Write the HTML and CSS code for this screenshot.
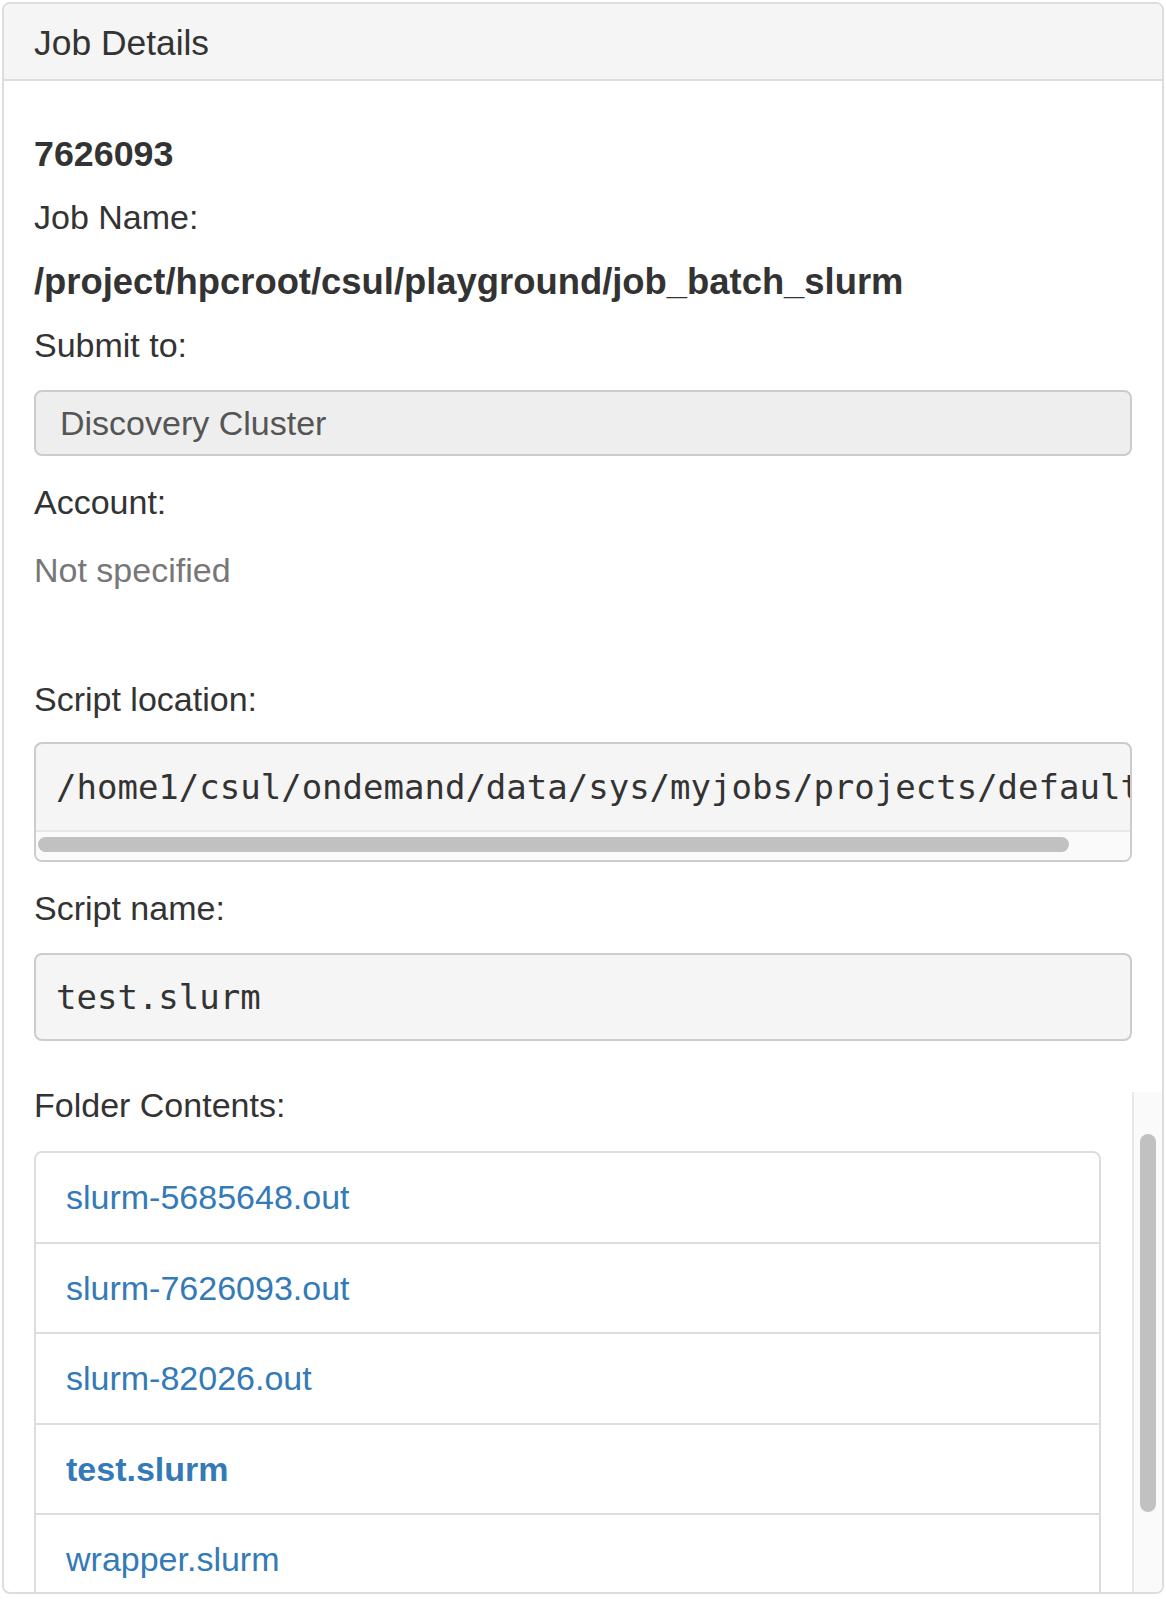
FILE: index.html
```html
<!DOCTYPE html>
<html lang="en">
<head>
<meta charset="utf-8">
<title>Job Details</title>
<link rel="stylesheet" href="styles.css">
</head>
<body>
<div class="panel">
  <div class="panel-heading">
    <h3 class="panel-title">Job Details</h3>
  </div>
  <div class="panel-body">
    <div class="job-id">7626093</div>
    <div class="line label-job-name">Job Name:</div>
    <div class="job-name">/project/hpcroot/csul/playground/job_batch_slurm</div>
    <div class="line label-submit">Submit to:</div>
    <div class="select-box">Discovery Cluster</div>
    <div class="line label-account">Account:</div>
    <div class="line muted">Not specified</div>
    <div class="line label-script-loc">Script location:</div>
    <div class="code-box">
      <pre class="code code-scroll">/home1/csul/ondemand/data/sys/myjobs/projects/default/1</pre>
      <div class="hscroll"><div class="hscroll-thumb"></div></div>
    </div>
    <div class="line label-script-name">Script name:</div>
    <pre class="code code-plain">test.slurm</pre>
    <div class="files">
      <div class="files-content">
        <div class="line">Folder Contents:</div>
        <ul class="file-list">
          <li class="file-item"><a href="#">slurm-5685648.out</a></li>
          <li class="file-item"><a href="#">slurm-7626093.out</a></li>
          <li class="file-item"><a href="#">slurm-82026.out</a></li>
          <li class="file-item"><a href="#" class="current">test.slurm</a></li>
          <li class="file-item"><a href="#">wrapper.slurm</a></li>
        </ul>
      </div>
      <div class="vscroll"><div class="vscroll-thumb"></div></div>
    </div>
  </div>
</div>
</body>
</html>
```
FILE: styles.css
```css
* { box-sizing: border-box; }
html, body { margin: 0; }
body {
  padding: 2px;
  background: #fff;
  color: #333;
  font-family: "Liberation Sans", Arial, sans-serif;
}
.panel {
  border: 2px solid #ddd;
  border-radius: 8px;
  overflow: hidden;
  background: #fff;
}
.panel-heading {
  background: #f5f5f5;
  border-bottom: 2px solid #ddd;
  padding: 20px 30px 17px;
}
.panel-title {
  margin: 0;
  font-size: 35.4px;
  line-height: 38px;
  font-weight: normal;
  color: #333;
}
.panel-body {
  padding: 30px 30px 0;
}
.line {
  font-size: 34px;
  line-height: 48px;
}
.job-id {
  margin-top: 19px;
  font-size: 35.8px;
  line-height: 48px;
  font-weight: bold;
}
.label-job-name { margin-top: 15px; }
.job-name {
  margin-top: 17px;
  font-size: 36.4px;
  line-height: 48px;
  font-weight: bold;
}
.label-submit { margin-top: 15px; }
.select-box {
  margin-top: 21px;
  height: 66px;
  border: 2px solid #ccc;
  border-radius: 8px;
  background: #eee;
  color: #555;
  padding: 0 24px;
  font-size: 34px;
  line-height: 62px;
}
.label-account { margin-top: 22px; }
.muted { margin-top: 20px; color: #777; }
.label-script-loc { margin-top: 81px; }
.code {
  margin: 0;
  font-family: "DejaVu Sans Mono", monospace;
  font-size: 34px;
  line-height: 48px;
  color: #333;
  white-space: pre;
  overflow: hidden;
}
.code-box {
  margin-top: 19px;
  background: #f5f5f5;
  border: 2px solid #ccc;
  border-radius: 8px;
  overflow: hidden;
}
.code-scroll {
  padding: 19px 20px;
}
.hscroll {
  height: 30px;
  background: #fafafa;
  border-top: 2px solid #e8e8e8;
  padding: 5px 2px 0;
}
.hscroll-thumb {
  width: 1031px;
  height: 15px;
  border-radius: 8px;
  background: #c1c1c1;
}
.label-script-name { margin-top: 22px; }
.code-plain {
  margin-top: 21px;
  padding: 18px 20px;
  background: #f5f5f5;
  border: 2px solid #ccc;
  border-radius: 8px;
}
.files {
  display: flex;
  margin-top: 40px;
  margin-right: -30px;
  height: 511px;
}
.files-content {
  flex: 1;
  min-width: 0;
  overflow: hidden;
  padding-right: 31px;
}
.vscroll {
  width: 30px;
  margin-top: 11px;
  background: #fafafa;
  border-left: 2px solid #e8e8e8;
  padding: 42px 6px 0 6px;
}
.vscroll-thumb {
  width: 16px;
  height: 378px;
  border-radius: 8px;
  background: #c1c1c1;
}
.file-list {
  list-style: none;
  margin: 22px 0 0;
  padding: 0;
}
.file-item {
  border: 2px solid #ddd;
  margin-bottom: -2px;
  padding: 20px 30px;
  font-size: 34px;
  line-height: 48.5px;
}
.file-item:first-child { border-radius: 8px 8px 0 0; }
.file-item:last-child { border-radius: 0 0 8px 8px; }
.file-item a {
  color: #337ab7;
  text-decoration: none;
}
.file-item a.current { font-weight: bold; }
```
